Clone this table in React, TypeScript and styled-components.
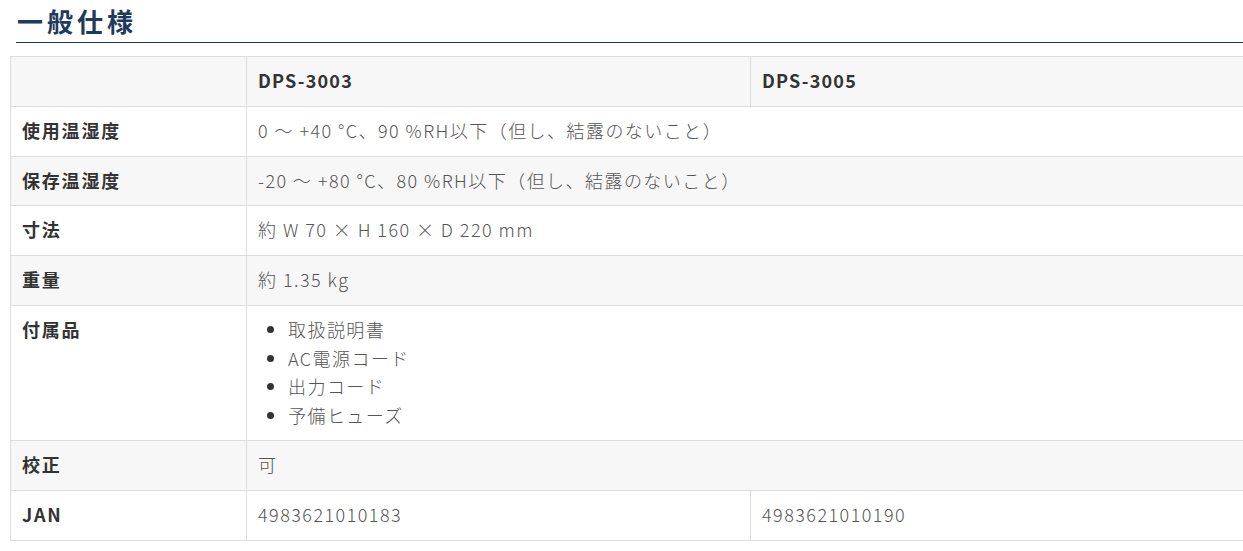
import React from "react";
import styled, { createGlobalStyle } from "styled-components";

const GlobalStyle = createGlobalStyle`
  html, body {
    margin: 0;
    padding: 0;
    background: #ffffff;
    overflow: hidden;
  }
  body {
    font-family: "Noto Sans CJK JP", "Noto Sans", sans-serif;
    color: #555555;
  }
`;

const Page = styled.div`
  width: 1270px;
  padding-top: 3px;
`;

const Heading = styled.h2`
  margin: 0 0 13px 16px;
  padding: 0 0 4px 1px;
  font-size: 26px;
  line-height: 35px;
  font-weight: 700;
  letter-spacing: 4px;
  color: #1e3a5c;
  border-bottom: 1px solid #1c3a44;
`;

const Table = styled.table`
  margin-left: 10px;
  width: 1260px;
  border-collapse: collapse;
  table-layout: fixed;
  font-size: 18px;
  line-height: 28.8px;
`;

const HeadRow = styled.tr`
  background: #f7f7f7;
`;

const Row = styled.tr<{ $shaded?: boolean }>`
  background: ${(p) => (p.$shaded ? "#f7f7f7" : "#ffffff")};
`;

const HeadCell = styled.th`
  border: 1px solid #dddddd;
  padding: 9px 11px 11px;
  text-align: left;
  font-weight: 700;
  letter-spacing: 1.2px;
  color: #333333;
`;

const LabelCell = styled.th`
  border: 1px solid #dddddd;
  padding: 9px 11px 11px;
  text-align: left;
  vertical-align: top;
  font-weight: 700;
  letter-spacing: 1.8px;
  color: #333333;
`;

const ValueCell = styled.td`
  border: 1px solid #dddddd;
  padding: 9px 11px 11px;
  vertical-align: top;
  font-weight: 300;
  letter-spacing: 1.45px;
  color: #555555;
`;

const List = styled.ul`
  margin: 0;
  padding-left: 30px;
  li {
    line-height: 28.6px;
  }
  li::marker {
    color: #333333;
  }
`;

const rows: { label: string; value: string }[] = [
  { label: "使用温湿度", value: "0 ～ +40 °C、90 %RH以下（但し、結露のないこと）" },
  { label: "保存温湿度", value: "-20 ～ +80 °C、80 %RH以下（但し、結露のないこと）" },
  { label: "寸法", value: "約 W 70 × H 160 × D 220 mm" },
  { label: "重量", value: "約 1.35 kg" },
];

export default function App() {
  return (
    <Page>
      <GlobalStyle />
      <Heading>一般仕様</Heading>
      <Table>
        <colgroup>
          <col style={{ width: 236 }} />
          <col style={{ width: 504 }} />
          <col />
        </colgroup>
        <thead>
          <HeadRow>
            <HeadCell />
            <HeadCell>DPS-3003</HeadCell>
            <HeadCell>DPS-3005</HeadCell>
          </HeadRow>
        </thead>
        <tbody>
          {rows.map((r, i) => (
            <Row key={r.label} $shaded={i % 2 === 1}>
              <LabelCell>{r.label}</LabelCell>
              <ValueCell colSpan={2}>{r.value}</ValueCell>
            </Row>
          ))}
          <Row>
            <LabelCell>付属品</LabelCell>
            <ValueCell colSpan={2}>
              <List>
                <li>取扱説明書</li>
                <li>AC電源コード</li>
                <li>出力コード</li>
                <li>予備ヒューズ</li>
              </List>
            </ValueCell>
          </Row>
          <Row $shaded>
            <LabelCell>校正</LabelCell>
            <ValueCell colSpan={2}>可</ValueCell>
          </Row>
          <Row>
            <LabelCell>JAN</LabelCell>
            <ValueCell>4983621010183</ValueCell>
            <ValueCell>4983621010190</ValueCell>
          </Row>
        </tbody>
      </Table>
    </Page>
  );
}
